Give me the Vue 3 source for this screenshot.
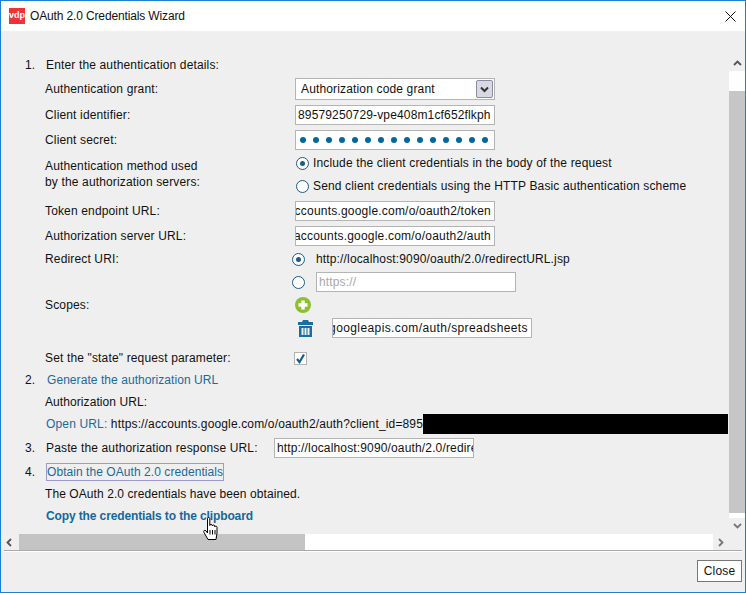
<script setup>
const dots = Array.from({ length: 15 }, (_, i) => i)
</script>

<template>
  <div class="window">
    <header class="titlebar">
      <span class="logo">vdp</span>
      <span class="title">OAuth 2.0 Credentials Wizard</span>
      <svg class="x" width="11" height="11" viewBox="0 0 11 11"><path d="M.5.5l10 10M10.500.5l-10 10" stroke="#111" stroke-width="1" fill="none" /></svg>
    </header>

    <div class="middle">
      <main class="viewport">
        <div class="row first"><span class="num">1.</span><span>Enter the authentication details:</span></div>

        <div class="row sel-row">
          <label class="lbl">Authentication grant:</label>
          <div class="select">
            <span>Authorization code grant</span>
            <span class="sel-btn"><svg width="9" height="7" viewBox="0 0 9 7"><path d="M1 1.500l3.500 3.500L8 1.500" stroke="#333" stroke-width="2" fill="none" /></svg></span>
          </div>
        </div>
        <div class="row">
          <label class="lbl">Client identifier:</label>
          <div class="field start">89579250729-vpe408m1cf652flkph</div>
        </div>
        <div class="row">
          <label class="lbl">Client secret:</label>
          <div class="field dots"><i v-for="d in dots" :key="d"></i></div>
        </div>

        <div class="row method">
          <label class="lbl two">Authentication method used<br>by the authorization servers:</label>
          <div class="options">
            <div class="opt"><span class="radio on"></span>Include the client credentials in the body of the request</div>
            <div class="opt"><span class="radio"></span>Send client credentials using the HTTP Basic authentication scheme</div>
          </div>
        </div>

        <div class="row tight">
          <label class="lbl">Token endpoint URL:</label>
          <div class="field end"><span>https://accounts.google.com/o/oauth2/token</span></div>
        </div>
        <div class="row">
          <label class="lbl">Authorization server URL:</label>
          <div class="field end"><span>https://accounts.google.com/o/oauth2/auth</span></div>
        </div>

        <div class="row near">
          <label class="lbl">Redirect URI:</label>
          <div class="uri"><span class="radio on"></span><span>http://localhost:9090/oauth/2.0/redirectURL.jsp</span></div>
        </div>
        <div class="row near">
          <span class="lbl"></span>
          <div class="uri"><span class="radio"></span><div class="field ph">https://</div></div>
        </div>
        <div class="row near">
          <label class="lbl">Scopes:</label>
          <svg class="add" width="16" height="16" viewBox="0 0 16 16">
            <circle cx="8" cy="8" r="8" fill="#8dc02f" />
            <path d="M6.300 3.500h3.400v2.800h2.800v3.400H9.700v2.800H6.300V9.700H3.500V6.300h2.800z" fill="#fff" />
          </svg>
        </div>
        <div class="row near">
          <span class="lbl"></span>
          <svg class="trash" width="15" height="17" viewBox="0 0 15 17">
            <path d="M5 0h5l1 2h4v3H0V2h4z" fill="#1a6d9f" />
            <path fill-rule="evenodd" d="M1 6h13v11H1zM3.500 8v7h2V8zM6.500 8v7h2V8zM9.500 8v7h2V8z" fill="#1a6d9f" />
          </svg>
          <div class="field end scope"><span>https://www.googleapis.com/auth/spreadsheets</span></div>
        </div>

        <div class="row state">
          <label class="lbl">Set the "state" request parameter:</label>
          <span class="check">
            <svg width="11" height="11" viewBox="0 0 11 11"><path d="M2 6l2.500 3L9 1.500" stroke="#0f5f96" stroke-width="2.200" fill="none" /></svg>
          </span>
        </div>

        <div class="row step2"><span class="num">2.</span><a class="link after-num">Generate the authorization URL</a></div>
        <div class="row step2"><span class="indent note">Authorization URL:</span></div>
        <div class="row step2 url">
          <span class="indent"><a class="link">Open URL:</a> https://accounts.google.com/o/oauth2/auth?client_id=895</span><span class="redact"></span>
        </div>

        <div class="row step3"><span class="num">3.</span><span class="paste">Paste the authorization response URL:</span>
          <div class="field start">http://localhost:9090/oauth/2.0/redirectURL.jsp</div>
        </div>
        <div class="row step4"><span class="num">4.</span><a class="link focus">Obtain the OAuth 2.0 credentials</a></div>
        <div class="row near"><span class="indent note">The OAuth 2.0 credentials have been obtained.</span></div>
        <div class="row step2"><a class="link bold">Copy the credentials to the clipboard</a></div>
      </main>

      <aside class="vbar">
        <span class="arrow"><svg width="9" height="6" viewBox="0 0 9 6"><path d="M1 5l3.500-3.500L8 5" stroke="#555" stroke-width="1.800" fill="none" /></svg></span>
        <div class="vtrack"><div class="vthumb"></div></div>
        <span class="arrow"><svg width="9" height="6" viewBox="0 0 9 6"><path d="M1 1l3.500 3.500L8 1" stroke="#777" stroke-width="1.800" fill="none" /></svg></span>
      </aside>
    </div>

    <div class="hbar">
      <span class="arrow left"><svg width="6" height="9" viewBox="0 0 6 9"><path d="M5 1L1.500 4.500 5 8" stroke="#555" stroke-width="1.800" fill="none" /></svg></span>
      <div class="hthumb"></div>
      <div class="htrack"></div>
      <span class="arrow"><svg width="6" height="9" viewBox="0 0 6 9"><path d="M1 1l3.500 3.500L1 8" stroke="#777" stroke-width="1.800" fill="none" /></svg></span>
    </div>

    <footer class="footer"><button class="close">Close</button></footer>

    <svg class="cursor" width="18" height="24" viewBox="0 0 18 24">
      <path d="M4.500 1.500c0-1.300 2.300-1.300 2.300 0V8.500c.1-1.500 2.400-1.500 2.500 0v.5c.2-1.300 2.300-1.300 2.400 0v.8c.4-1 2.300-.9 2.300.5v5.700L13 22.500H5L1 15.500c-.9-1.800.8-3 2-1.600L4.500 16z" fill="#fff" stroke="#000" stroke-width="1" stroke-linejoin="round" />
      <path d="M7 13v4.500M9.500 13v4.500M12 13v4.500" stroke="#000" stroke-width="1" />
    </svg>
  </div>
</template>

<style>
html, body { margin: 0; background: #efefef; }
</style>

<style scoped>
.window {
  position: relative;
  box-sizing: border-box;
  width: 746px;
  height: 593px;
  border: 1px solid #1b82d2;
  background: #efefef;
  display: flex;
  flex-direction: column;
  overflow: hidden;
  font: 12px "Liberation Sans", Arial, sans-serif;
  letter-spacing: .15px;
  color: #111;
}
.titlebar {
  height: 30px;
  flex: none;
  background: #fff;
  display: flex;
  align-items: center;
  padding: 0 5px 0 8px;
}
.logo {
  width: 16px;
  height: 16px;
  background: #ee3338;
  color: #fff;
  font-size: 9px;
  font-weight: 700;
  line-height: 15px;
  text-align: center;
  letter-spacing: 0;
}
.title { margin-left: 5px; flex: 1; letter-spacing: -.14px; }
.x { margin-right: 4px; }

.middle { flex: 1; min-height: 0; display: flex; }
.viewport {
  position: relative;
  flex: 1;
  min-width: 0;
  overflow: hidden;
  padding: 24px 0 0 24px;
}
.row {
  display: flex;
  align-items: center;
  height: 20px;
  margin-top: 5px;
  white-space: nowrap;
}
.row.first { margin-top: 0; }
.row.sel-row { height: 22px; margin-top: 3px; }
.row.method { height: 44px; margin-top: 3px; align-items: stretch; }
.row.tight { margin-top: 4px; }
.row.near { margin-top: 3px; }
.row.state { margin-top: 10px; }
.row.step2 { margin-top: 2px; }
.row.step3 { margin-top: 4px; }
.row.step4 { margin-top: 5px; height: 18px; }
.num { width: 21px; flex: none; }
.lbl { width: 250px; flex: none; margin-left: 20px; }
.two { line-height: 16px; align-self: center; padding-bottom: 2px; }
.indent { margin-left: 20px; }
.note { letter-spacing: .08px; }
.field {
  box-sizing: border-box;
  width: 200px;
  height: 20px;
  flex: none;
  background: #fff;
  border: 1px solid #b4b4b4;
  display: flex;
  align-items: center;
  overflow: hidden;
  padding: 0 2px;
}
.field.end { justify-content: flex-end; letter-spacing: .21px; padding-right: 3px; }
.field.end span { flex: none; }
.field.scope { letter-spacing: .4px; padding-right: 3px; }
.field.dots { justify-content: flex-start; gap: 7px; padding-left: 4px; }
.dots i {
  width: 6px;
  height: 6px;
  flex: none;
  border-radius: 50%;
  background: #00689d;
}
.select {
  box-sizing: border-box;
  width: 200px;
  height: 22px;
  flex: none;
  background: #fff;
  border: 1px solid #b4b4b4;
  display: flex;
  align-items: center;
  justify-content: space-between;
  padding: 0 1px 0 5px;
}
.sel-btn {
  box-sizing: border-box;
  width: 17px;
  height: 18px;
  background: #d9d9e3;
  border: 1px solid #8b8ba3;
  border-radius: 2px;
  display: flex;
  align-items: center;
  justify-content: center;
}
.options { display: flex; flex-direction: column; gap: 3px; }
.opt { display: flex; align-items: center; height: 20px; }
.radio {
  box-sizing: border-box;
  width: 13px;
  height: 13px;
  flex: none;
  border: 1px solid #1d5c87;
  border-radius: 50%;
  background: #fff;
  display: block;
  position: relative;
}
.radio.on::after {
  content: "";
  position: absolute;
  left: 3px;
  top: 3px;
  width: 5px;
  height: 5px;
  border-radius: 50%;
  background: #1d5c87;
}
.opt .radio { margin: 0 4px 0 1px; }
.uri { display: flex; align-items: center; margin-left: -3px; }
.uri .radio { margin-right: 11px; }
.ph { color: #a8a8a8; }
.add { flex: none; }
.trash { margin-left: 3px; margin-right: 19px; flex: none; }
.check {
  box-sizing: border-box;
  width: 13px;
  height: 13px;
  margin-left: -1px;
  border: 1px solid #b4b4b4;
  background: #fff;
  display: flex;
  align-items: center;
  justify-content: center;
}
.link { color: #1b6a9c; letter-spacing: .06px; }
.url .link { letter-spacing: .15px; margin-left: 1px; }
.after-num { margin-left: 1px; }
.bold { font-weight: 700; margin-left: 21px; color: #14689d; letter-spacing: -.12px; }
.redact { width: 305px; height: 20px; flex: none; background: #000; }
.paste { flex: none; width: 228px; }
.focus { border: 1px solid #9b9bd2; line-height: 16px; }
.cursor { position: absolute; left: 202px; top: 516px; }

.vbar {
  width: 16px;
  flex: none;
  margin: 24px 0 0 0;
  display: flex;
  flex-direction: column;
}
.arrow {
  width: 16px;
  height: 16px;
  flex: none;
  display: flex;
  align-items: center;
  justify-content: center;
}
.arrow.left { box-sizing: border-box; width: 15px; padding-left: 2px; justify-content: flex-start; }
.vtrack { flex: 1; background: #fff; padding: 20px 0 5px; box-sizing: border-box; display: flex; }
.vthumb { flex: 1; background: #c6c6c6; }

.hbar {
  height: 16px;
  flex: none;
  margin: 0 16px 0 3px;
  display: flex;
}
.hthumb { width: 286px; background: #c4c4c4; }
.htrack { flex: 1; background: #fff; }

.footer {
  box-sizing: border-box;
  height: 42px;
  flex: none;
  margin: 0 3px;
  border-top: 1px solid #a9a9a9;
  box-shadow: inset 0 1px 0 #fff;
  display: flex;
  justify-content: flex-end;
  align-items: flex-start;
  padding-top: 9px;
}
.close {
  box-sizing: border-box;
  width: 45px;
  height: 22px;
  padding: 0;
  border: 1px solid #777;
  background: #fff;
  border-radius: 0;
  font: inherit;
  letter-spacing: inherit;
  color: #111;
}
</style>
